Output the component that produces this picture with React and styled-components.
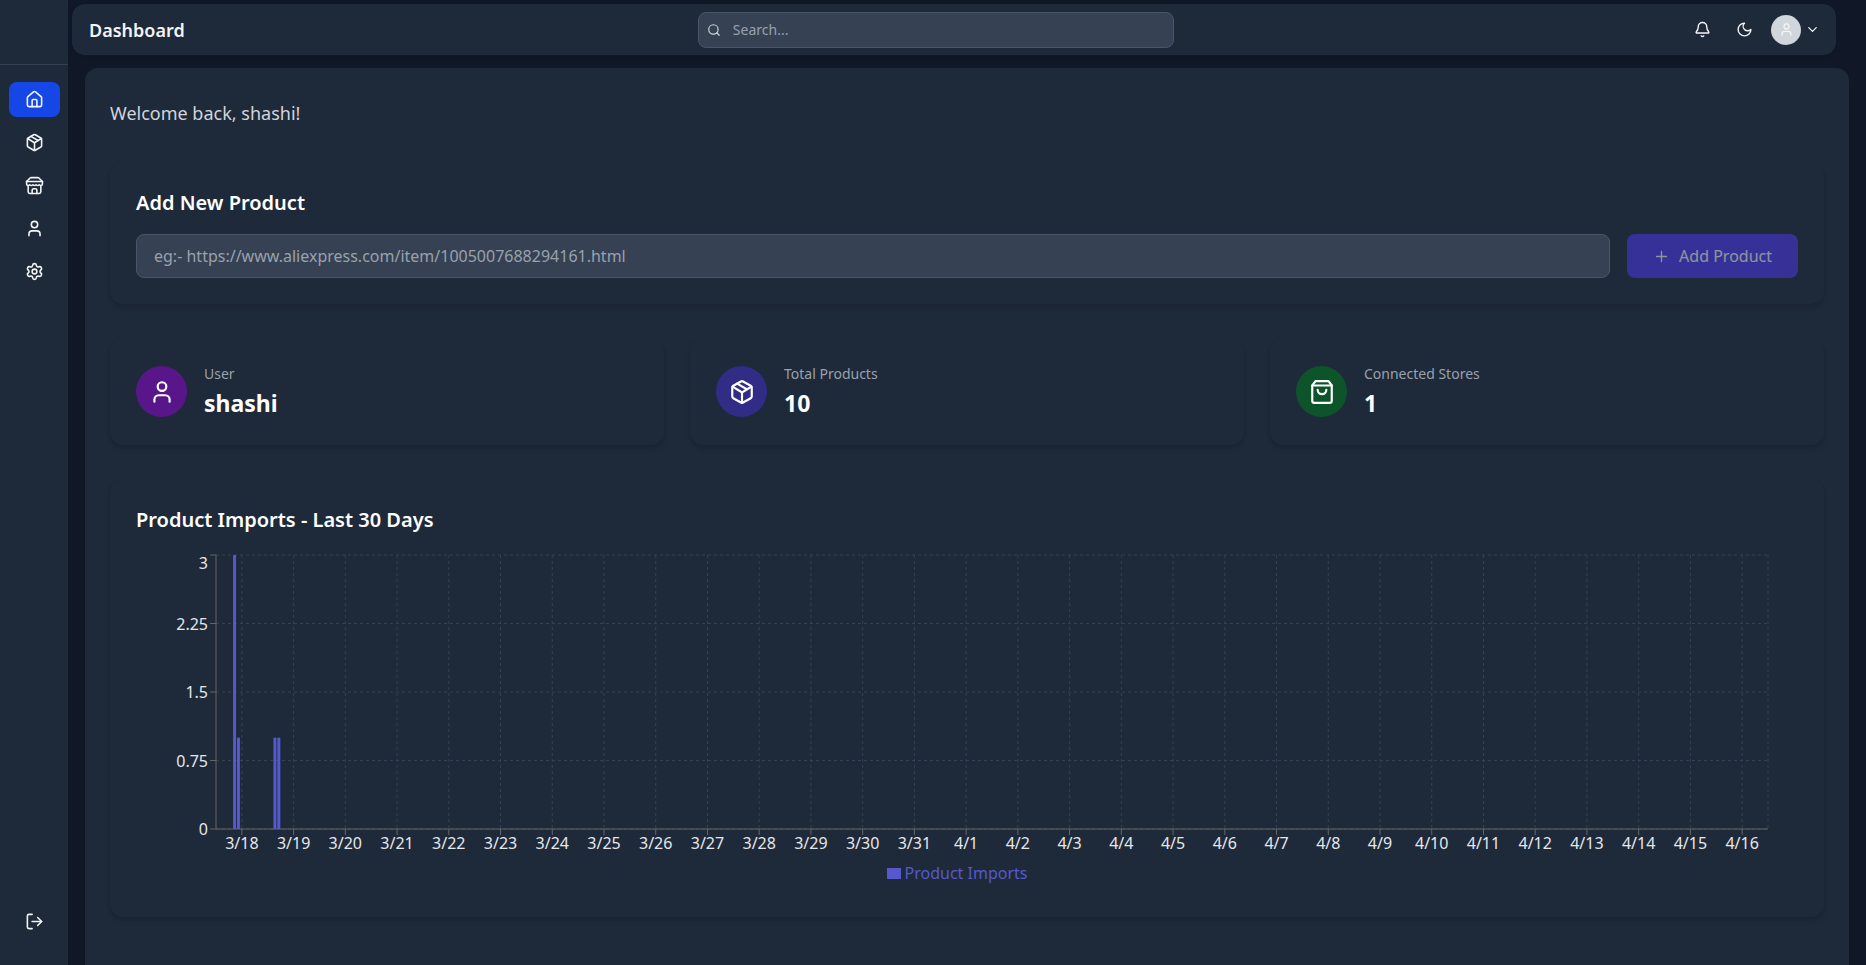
import React, { useLayoutEffect, useRef, useState } from "react";
import styled, { createGlobalStyle } from "styled-components";

const color = {
  page: "#101828",
  surface: "#1e2939",
  field: "#364153",
  border: "#4a5565",
  muted: "#99a1af",
  soft: "#d1d5dc",
  text: "#f3f4f6",
  white: "#ffffff",
  active: "#1447e6",
  series: "#5659ce",
};

const GlobalStyle = createGlobalStyle`
  *, *::before, *::after { box-sizing: border-box; }
  body {
    margin: 0;
    background: ${color.page};
    color: ${color.text};
    font-family: "Noto Sans", "Open Sans", sans-serif;
    font-size: 16px;
    line-height: 26px;
  }
  button, input { font: inherit; }
  h1, h2, p { margin: 0; }
`;

const IconSvg = styled.svg`
  display: block;
  flex: none;
  width: ${(p) => p.$size}px;
  height: ${(p) => p.$size}px;
  fill: none;
  stroke: currentColor;
  stroke-width: 2;
  stroke-linecap: round;
  stroke-linejoin: round;
`;

const shapes = {
  home: (
    <>
      <path d="M15 21v-8a1 1 0 0 0-1-1h-4a1 1 0 0 0-1 1v8" />
      <path d="M3 10a2 2 0 0 1 .709-1.528l7-5.999a2 2 0 0 1 2.582 0l7 5.999A2 2 0 0 1 21 10v9a2 2 0 0 1-2 2H5a2 2 0 0 1-2-2z" />
    </>
  ),
  box: (
    <>
      <path d="M11 21.73a2 2 0 0 0 2 0l7-4A2 2 0 0 0 21 16V8a2 2 0 0 0-1-1.73l-7-4a2 2 0 0 0-2 0l-7 4A2 2 0 0 0 3 8v8a2 2 0 0 0 1 1.73z" />
      <path d="M12 22V12" />
      <path d="m3.3 7 7.703 4.734a2 2 0 0 0 1.994 0L20.7 7" />
      <path d="m7.5 4.27 9 5.15" />
    </>
  ),
  store: (
    <>
      <path d="m2 7 4.41-4.41A2 2 0 0 1 7.83 2h8.34a2 2 0 0 1 1.42.59L22 7" />
      <path d="M4 12v8a2 2 0 0 0 2 2h12a2 2 0 0 0 2-2v-8" />
      <path d="M15 22v-4a2 2 0 0 0-2-2h-2a2 2 0 0 0-2 2v4" />
      <path d="M2 7h20" />
      <path d="M22 7v3a2 2 0 0 1-2 2a2.7 2.7 0 0 1-1.59-.63.7.7 0 0 0-.82 0A2.7 2.7 0 0 1 16 12a2.7 2.7 0 0 1-1.59-.63.7.7 0 0 0-.82 0A2.7 2.7 0 0 1 12 12a2.7 2.7 0 0 1-1.59-.63.7.7 0 0 0-.82 0A2.7 2.7 0 0 1 8 12a2.7 2.7 0 0 1-1.59-.63.7.7 0 0 0-.82 0A2.7 2.7 0 0 1 4 12a2 2 0 0 1-2-2V7" />
    </>
  ),
  user: (
    <>
      <path d="M19 21v-2a4 4 0 0 0-4-4H9a4 4 0 0 0-4 4v2" />
      <circle cx="12" cy="7" r="4" />
    </>
  ),
  settings: (
    <>
      <path d="M9.671 4.136a2.34 2.34 0 0 1 4.659 0 2.34 2.34 0 0 0 3.319 1.915 2.34 2.34 0 0 1 2.33 4.033 2.34 2.34 0 0 0 0 3.831 2.34 2.34 0 0 1-2.33 4.033 2.34 2.34 0 0 0-3.319 1.915 2.34 2.34 0 0 1-4.659 0 2.34 2.34 0 0 0-3.32-1.915 2.34 2.34 0 0 1-2.33-4.033 2.34 2.34 0 0 0 0-3.831A2.34 2.34 0 0 1 6.35 6.051a2.34 2.34 0 0 0 3.319-1.915" />
      <circle cx="12" cy="12" r="3" />
    </>
  ),
  logout: (
    <>
      <path d="M9 21H5a2 2 0 0 1-2-2V5a2 2 0 0 1 2-2h4" />
      <path d="m16 17 5-5-5-5" />
      <path d="M21 12H9" />
    </>
  ),
  search: (
    <>
      <circle cx="11" cy="11" r="8" />
      <path d="m21 21-4.3-4.3" />
    </>
  ),
  bell: (
    <>
      <path d="M10.268 21a2 2 0 0 0 3.464 0" />
      <path d="M3.262 15.326A1 1 0 0 0 4 17h16a1 1 0 0 0 .74-1.673C19.41 13.956 18 12.499 18 8A6 6 0 0 0 6 8c0 4.499-1.411 5.956-2.738 7.326" />
    </>
  ),
  moon: <path d="M12 3a6 6 0 0 0 9 9 9 9 0 1 1-9-9Z" />,
  chevron: <path d="m6 9 6 6 6-6" />,
  plus: <path d="M5 12h14M12 5v14" />,
  bag: (
    <>
      <path d="M6 2 3 6v14a2 2 0 0 0 2 2h14a2 2 0 0 0 2-2V6l-3-4Z" />
      <path d="M3 6h18" />
      <path d="M16 10a4 4 0 0 1-8 0" />
    </>
  ),
};

function Icon({ name, size }) {
  return (
    <IconSvg viewBox="0 0 24 24" $size={size} aria-hidden="true">
      {shapes[name]}
    </IconSvg>
  );
}

const Shell = styled.div`
  display: flex;
  min-height: 100vh;
`;

const Sidebar = styled.aside`
  flex: none;
  width: 68px;
  display: flex;
  flex-direction: column;
  background: ${color.surface};
`;

const Brand = styled.div`
  height: 65px;
  border-bottom: 1px solid ${color.field};
`;

const Nav = styled.nav`
  flex: 1;
  display: flex;
  flex-direction: column;
  gap: 8px;
  padding: 17px 8px 17px 9px;
`;

const NavLink = styled.a`
  display: flex;
  align-items: center;
  justify-content: center;
  height: 35px;
  border-radius: 8px;
  color: ${color.text};
  background: ${(p) => (p.$active ? color.active : "transparent")};
`;

const SidebarFooter = styled.div`
  padding: 26px 8px 26px 9px;
`;

const LogoutButton = styled.button`
  width: 100%;
  height: 35px;
  display: flex;
  align-items: center;
  justify-content: center;
  padding: 0;
  border: 0;
  border-radius: 8px;
  background: none;
  color: ${color.text};
`;

const Body = styled.div`
  flex: 1;
  min-width: 0;
  display: flex;
  flex-direction: column;
`;

const Header = styled.header`
  display: flex;
  align-items: center;
  justify-content: space-between;
  margin: 4px 30px 0 4px;
  padding: 0 16px 0 17px;
  height: 51px;
  border-radius: 13px;
  background: ${color.surface};
  box-shadow: 0 1px 3px rgba(0, 0, 0, 0.1);
`;

const PageTitle = styled.h1`
  font-size: 18px;
  line-height: 26px;
  font-weight: 600;
`;

const SearchField = styled.div`
  display: flex;
  align-items: center;
  gap: 12px;
  flex: 0 1 476px;
  height: 36px;
  padding: 0 8px;
  border: 1px solid ${color.border};
  border-radius: 8px;
  background: ${color.field};
  color: ${color.soft};
`;

const SearchInput = styled.input`
  flex: 1;
  min-width: 0;
  padding: 0;
  border: 0;
  outline: 0;
  background: none;
  color: ${color.text};
  font-size: 14px;
  &::placeholder { color: ${color.muted}; }
`;

const HeaderActions = styled.div`
  display: flex;
  align-items: center;
  gap: 12px;
`;

const IconButton = styled.button`
  display: flex;
  align-items: center;
  justify-content: center;
  width: 30px;
  height: 30px;
  padding: 0;
  border: 0;
  background: none;
  color: ${color.text};
`;

const AccountButton = styled.button`
  display: flex;
  align-items: center;
  gap: 4px;
  padding: 0;
  border: 0;
  background: none;
  color: ${color.text};
`;

const Avatar = styled.span`
  display: flex;
  align-items: center;
  justify-content: center;
  width: 30px;
  height: 30px;
  border-radius: 50%;
  background: ${color.soft};
`;

const Main = styled.main`
  flex: 1;
  display: flex;
  flex-direction: column;
  gap: 34px;
  margin: 13px 17px 0;
  padding: 26px 25px 34px;
  border-radius: 13px 13px 0 0;
  background: ${color.surface};
`;

const Welcome = styled.p`
  padding-top: 4px;
  font-size: 18px;
  line-height: 30px;
  color: ${color.soft};
`;

const Card = styled.section`
  padding: 26px;
  border-radius: 13px;
  background: ${color.surface};
  box-shadow: 0 4px 6px -1px rgba(0, 0, 0, 0.1), 0 2px 4px -2px rgba(0, 0, 0, 0.1);
`;

const CardTitle = styled.h2`
  margin-bottom: 16px;
  font-size: 20px;
  line-height: 30px;
  font-weight: 600;
  color: ${color.white};
`;

const ProductForm = styled.form`
  display: flex;
  gap: 17px;
`;

const UrlInput = styled.input`
  flex: 1;
  min-width: 0;
  height: 44px;
  padding: 0 17px;
  border: 1px solid ${color.border};
  border-radius: 8px;
  outline: 0;
  background: ${color.field};
  color: ${color.text};
  &::placeholder { color: ${color.muted}; }
`;

const AddButton = styled.button`
  display: flex;
  align-items: center;
  justify-content: center;
  gap: 9px;
  height: 44px;
  padding: 0 26px;
  border: 0;
  border-radius: 8px;
  background: #4f39f6;
  color: ${color.white};
  opacity: 0.5;
`;

const Stats = styled.div`
  display: grid;
  grid-template-columns: repeat(3, 1fr);
  gap: 26px;
`;

const StatRow = styled.div`
  display: flex;
  align-items: center;
  gap: 17px;
`;

const StatIcon = styled.div`
  display: flex;
  align-items: center;
  justify-content: center;
  width: 51px;
  height: 51px;
  border-radius: 50%;
  background: ${(p) => p.$tone};
  color: ${color.white};
`;

const StatLabel = styled.p`
  margin-bottom: 4px;
  font-size: 14px;
  line-height: 20px;
  color: ${color.muted};
`;

const StatValue = styled.p`
  font-size: 23px;
  line-height: 31px;
  font-weight: 700;
  color: ${color.white};
`;

const ChartBox = styled.div`
  height: 340px;
`;

const ChartSvg = styled.svg`
  display: block;
  width: 100%;
  height: 308px;
`;

const AxisText = styled.text`
  fill: #e5e7eb;
  font-size: 16px;
  text-anchor: ${(p) => p.$anchor};
`;

const Legend = styled.div`
  display: flex;
  align-items: center;
  justify-content: center;
  gap: 4px;
  padding-right: 20px;
  color: ${color.series};
  line-height: 28px;
`;

const Swatch = styled.span`
  width: 14px;
  height: 11px;
  background: ${color.series};
`;

const navItems = [
  { icon: "home", label: "Dashboard" },
  { icon: "box", label: "Products" },
  { icon: "store", label: "Stores" },
  { icon: "user", label: "Profile" },
  { icon: "settings", label: "Settings" },
];

const stats = [
  { icon: "user", label: "User", value: "shashi", tone: "#59168b" },
  { icon: "box", label: "Total Products", value: "10", tone: "#312c85" },
  { icon: "bag", label: "Connected Stores", value: "1", tone: "#0d542b" },
];

const days = [
  ...Array.from({ length: 14 }, (_, i) => `3/${18 + i}`),
  ...Array.from({ length: 16 }, (_, i) => `4/${1 + i}`),
];

// position is measured in days from the left edge of the plot
const imports = [
  { position: 0.33, count: 3 },
  { position: 0.405, count: 1 },
  { position: 1.11, count: 1 },
  { position: 1.185, count: 1 },
];

const yTicks = [0, 0.75, 1.5, 2.25, 3];
const plot = { left: 80, right: 30, top: 4, height: 274 };

function ImportsChart() {
  const ref = useRef(null);
  const [width, setWidth] = useState(1000);

  useLayoutEffect(() => {
    const measure = () => setWidth(ref.current.clientWidth);
    measure();
    const observer = new ResizeObserver(measure);
    observer.observe(ref.current);
    return () => observer.disconnect();
  }, []);

  const right = width - plot.right;
  const bottom = plot.top + plot.height;
  const step = (right - plot.left) / days.length;
  const dayX = (i) => plot.left + step * (i + 0.5);
  const valueY = (v) => bottom - (v / 3) * plot.height;

  return (
    <ChartBox ref={ref}>
      <ChartSvg role="img" aria-label="Product imports per day">
        <g stroke="#364153" strokeDasharray="3 3">
          {yTicks.map((v) => (
            <line key={v} x1={plot.left} x2={right} y1={valueY(v)} y2={valueY(v)} />
          ))}
          {days.map((d, i) => (
            <line key={d} x1={dayX(i)} x2={dayX(i)} y1={plot.top} y2={bottom} />
          ))}
          <line x1={right} x2={right} y1={plot.top} y2={bottom} />
        </g>
        <g stroke="#666666">
          <line x1={plot.left} x2={plot.left} y1={plot.top} y2={bottom} />
          <line x1={plot.left} x2={right} y1={bottom} y2={bottom} />
          {yTicks.map((v) => (
            <line key={v} x1={plot.left - 6} x2={plot.left} y1={valueY(v)} y2={valueY(v)} />
          ))}
          {days.map((d, i) => (
            <line key={d} x1={dayX(i)} x2={dayX(i)} y1={bottom} y2={bottom + 6} />
          ))}
        </g>
        <g fill={color.series}>
          {imports.map((b) => (
            <rect
              key={b.position}
              x={plot.left + step * b.position}
              y={valueY(b.count)}
              width="3"
              height={bottom - valueY(b.count)}
            />
          ))}
        </g>
        {yTicks.map((v) => (
          <AxisText key={v} $anchor="end" x={plot.left - 8} y={v === 3 ? valueY(v) + 14 : valueY(v) + 6}>
            {v}
          </AxisText>
        ))}
        {days.map((d, i) => (
          <AxisText key={d} $anchor="middle" x={dayX(i)} y={bottom + 20}>
            {d}
          </AxisText>
        ))}
      </ChartSvg>
      <Legend>
        <Swatch />
        Product Imports
      </Legend>
    </ChartBox>
  );
}

export default function App() {
  return (
    <>
      <GlobalStyle />
      <Shell>
        <Sidebar>
          <Brand />
          <Nav aria-label="Main">
            {navItems.map((item, i) => (
              <NavLink key={item.icon} href="#" aria-label={item.label} $active={i === 0}>
                <Icon name={item.icon} size={19} />
              </NavLink>
            ))}
          </Nav>
          <SidebarFooter>
            <LogoutButton type="button" aria-label="Log out">
              <Icon name="logout" size={19} />
            </LogoutButton>
          </SidebarFooter>
        </Sidebar>
        <Body>
          <Header>
            <PageTitle>Dashboard</PageTitle>
            <SearchField>
              <Icon name="search" size={14} />
              <SearchInput type="search" placeholder="Search..." aria-label="Search" />
            </SearchField>
            <HeaderActions>
              <IconButton type="button" aria-label="Notifications">
                <Icon name="bell" size={17} />
              </IconButton>
              <IconButton type="button" aria-label="Dark mode">
                <Icon name="moon" size={17} />
              </IconButton>
              <AccountButton type="button" aria-label="Account">
                <Avatar>
                  <Icon name="user" size={15} />
                </Avatar>
                <Icon name="chevron" size={15} />
              </AccountButton>
            </HeaderActions>
          </Header>
          <Main>
            <Welcome>Welcome back, shashi!</Welcome>
            <Card>
              <CardTitle>Add New Product</CardTitle>
              <ProductForm>
                <UrlInput
                  type="text"
                  aria-label="Product link"
                  placeholder="eg:- https://www.aliexpress.com/item/1005007688294161.html"
                />
                <AddButton type="button" disabled>
                  <Icon name="plus" size={17} />
                  Add Product
                </AddButton>
              </ProductForm>
            </Card>
            <Stats>
              {stats.map((s) => (
                <Card key={s.label}>
                  <StatRow>
                    <StatIcon $tone={s.tone}>
                      <Icon name={s.icon} size={26} />
                    </StatIcon>
                    <div>
                      <StatLabel>{s.label}</StatLabel>
                      <StatValue>{s.value}</StatValue>
                    </div>
                  </StatRow>
                </Card>
              ))}
            </Stats>
            <Card>
              <CardTitle>Product Imports - Last 30 Days</CardTitle>
              <ImportsChart />
            </Card>
          </Main>
        </Body>
      </Shell>
    </>
  );
}
